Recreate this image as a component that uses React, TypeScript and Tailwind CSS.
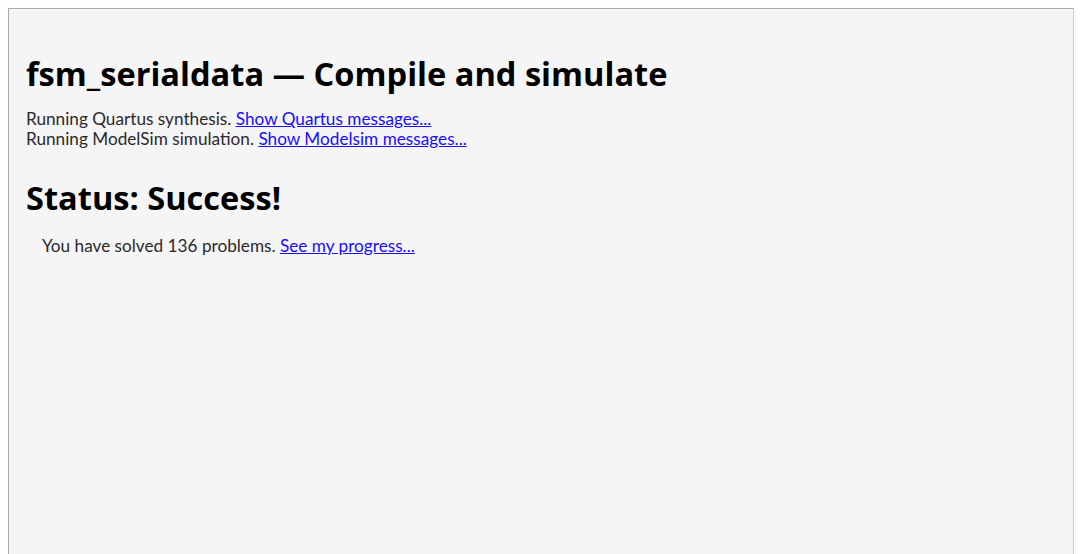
export default function App() {
  return (
    <div className="h-[554px] overflow-hidden bg-white pt-2 pl-2">
      <div
        className="h-[546px] w-[1066px] border border-b-0 border-[#aaaaaa] border-r-[#cccccc] bg-[#f5f5f5] px-[17px] pt-[43px] text-[#2a2a2a]"
        style={{ fontFamily: 'Lato, "Noto Sans", sans-serif' }}
      >
        <h1 className="font-['Open_Sans',sans-serif] text-[32.6px] font-bold leading-[44px] text-black">
          fsm_serialdata — Compile and simulate
        </h1>
        <div className="mt-[13px] text-[17.2px] leading-[20px]">
          <div>
            Running Quartus synthesis.{' '}
            <a href="#" className="text-[#1a0dff] underline">
              Show Quartus messages...
            </a>
          </div>
          <div>
            Running ModelSim simulation.{' '}
            <a href="#" className="text-[#1a0dff] underline">
              Show Modelsim messages...
            </a>
          </div>
        </div>
        <h2 className="mt-[27px] font-['Open_Sans',sans-serif] text-[32.6px] font-bold leading-[44px] text-black">
          Status: Success!
        </h2>
        <div className="mt-[16px] pl-4 text-[17.2px] leading-[20px]">
          You have solved 136 problems.{' '}
          <a href="#" className="text-[#1a0dff] underline">
            See my progress...
          </a>
        </div>
      </div>
    </div>
  )
}
